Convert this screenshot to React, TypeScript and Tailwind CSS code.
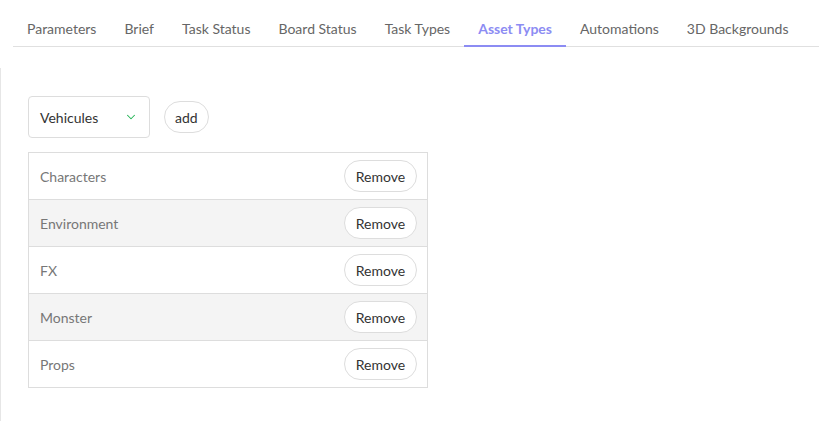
import { ChevronDown } from "lucide-react"

const tabs = [
  "Parameters",
  "Brief",
  "Task Status",
  "Board Status",
  "Task Types",
  "Asset Types",
  "Automations",
  "3D Backgrounds",
]

const assetTypes = ["Characters", "Environment", "FX", "Monster", "Props"]

export default function App() {
  return (
    <div
      className="h-[421px] w-[819px] overflow-hidden bg-white text-[14px]"
      style={{ fontFamily: 'Lato, "Open Sans", sans-serif' }}
    >
      <div className="pl-[13px] pt-[11px]">
        <div className="flex border-b border-[#e0e0e0]">
          {tabs.map((tab) => (
            <div
              key={tab}
              className={
                tab === "Asset Types"
                  ? "-mb-px whitespace-nowrap border-b-2 border-[#8c8cf3] px-[14px] pb-[6px] pt-[7px] font-bold text-[#8c8cf3]"
                  : "whitespace-nowrap px-[14px] pb-[7px] pt-[7px] text-[#666]"
              }
            >
              {tab}
            </div>
          ))}
        </div>
      </div>

      <div className="mt-[21px] h-[400px] border-l border-[#e6e6e6] px-[27px] pt-[28px]">
        <div className="flex items-center gap-[14px]">
          <div className="flex h-[42px] w-[122px] items-center justify-between rounded-[4px] border border-[#dddddd] pl-[11px] pr-[11px] text-[#333]">
            <span>Vehicules</span>
            <ChevronDown className="h-[14px] w-[14px] text-[#22b455]" strokeWidth={1.8} />
          </div>
          <button className="h-[32px] rounded-full border border-[#dddddd] px-[10px] text-[#333]">
            add
          </button>
        </div>

        <div className="mt-[14px] w-[400px] border border-[#dddddd]">
          {assetTypes.map((name, i) => (
            <div
              key={name}
              className={
                "flex h-[46px] items-center justify-between pl-[11px] pr-[10px] " +
                (i > 0 ? "h-[47px] border-t border-[#dddddd] " : "") +
                (i % 2 === 1 ? "bg-[#f4f4f4]" : "bg-white")
              }
            >
              <span className="text-[#777]">{name}</span>
              <button className="h-[32px] w-[73px] rounded-full border border-[#dddddd] bg-white text-[#333]">
                Remove
              </button>
            </div>
          ))}
        </div>
      </div>
    </div>
  )
}
